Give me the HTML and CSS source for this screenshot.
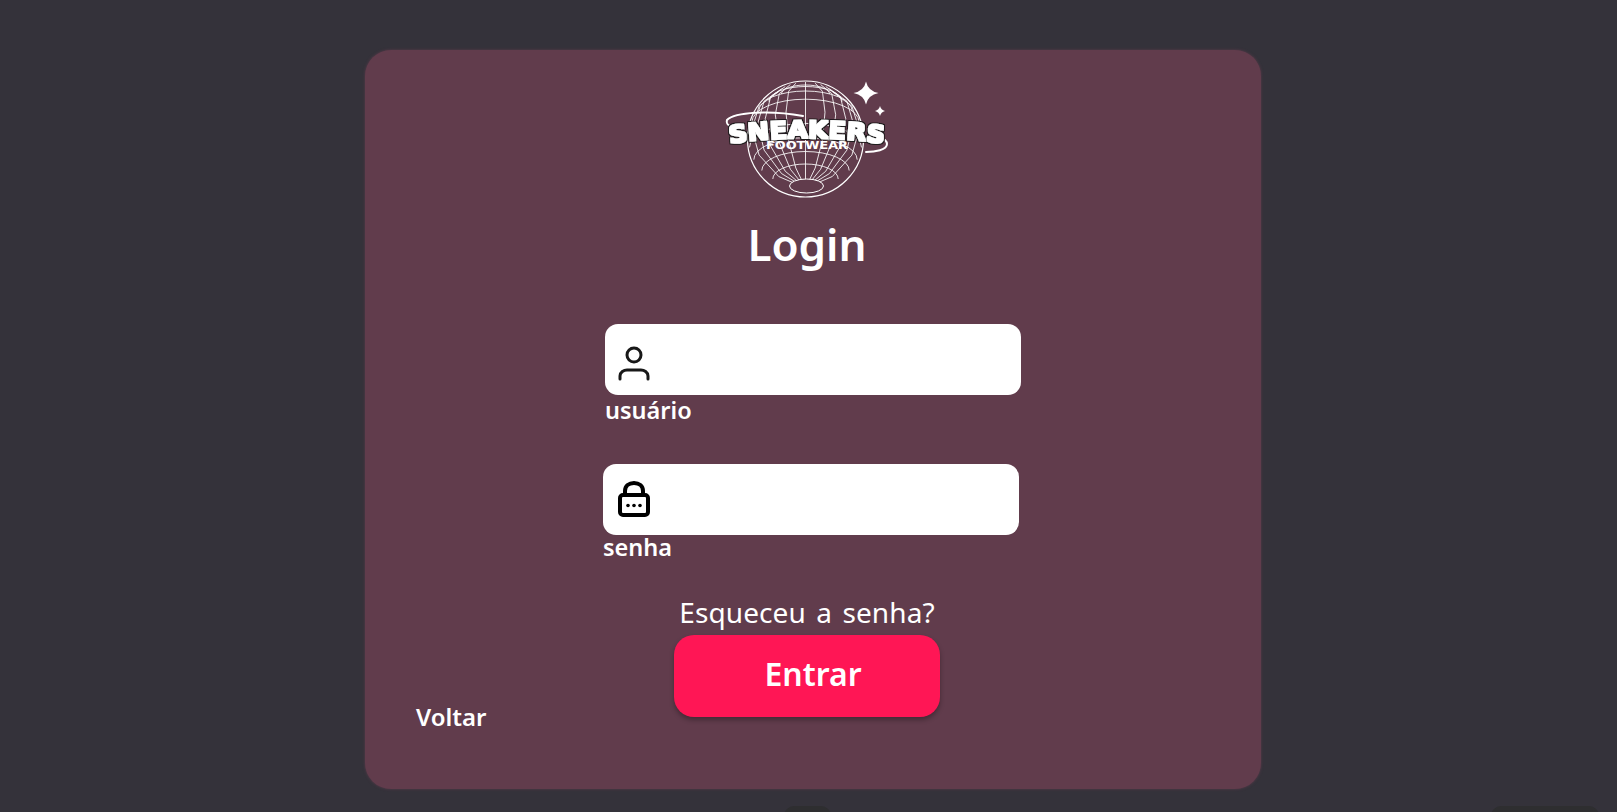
FILE: index.html
```html
<!DOCTYPE html>
<html lang="pt">
<head>
<meta charset="utf-8">
<title>Login</title>
<link rel="stylesheet" href="styles.css">
</head>
<body>
<main class="card">
  <svg class="logo" viewBox="0 0 170 122" width="170" height="122" aria-label="Sneakers Footwear">
    <defs>
      <filter id="heavy" x="-10%" y="-30%" width="120%" height="160%">
        <feMorphology in="SourceAlpha" operator="dilate" radius="2.4" result="outer"/>
        <feFlood flood-color="#1c1a1b"/>
        <feComposite in2="outer" operator="in" result="edge"/>
        <feMorphology in="SourceGraphic" operator="dilate" radius="0.7" result="fat"/>
        <feMerge><feMergeNode in="edge"/><feMergeNode in="fat"/></feMerge>
      </filter>
    </defs>
    <g class="globe" transform="translate(80.5 61)">
      <circle r="58" cx="0" cy="0"/>
      <path d="M0 49V-57"/>
      <g id="half">
        <path d="M0 49L9.7 29L16.9 1.3L19.5-26.8L16.9-47.7L9.7-55.8"/>
        <path d="M0 49L15.1 30.3L26.2 3.6L30.2-24.2L26.2-45.4L15.1-54.5"/>
        <path d="M0 49L20.2 32.3L34.9 7L40.3-20.2L34.9-42L20.2-52.5"/>
        <path d="M0 49L23.9 34.6L41.4 11.1L47.8-15.5L41.4-37.9L23.9-50.2"/>
        <path d="M0 49L26.8 37.5L46.4 16.1L53.6-9.7L46.4-32.9L26.8-47.3"/>
      </g>
      <use href="#half" transform="scale(-1 1)"/>
      <path d="M-32.7 40A32.7 15 0 0 1 32.7 40"/>
      <path d="M-43.7 31.5A43.7 19 0 0 1 43.7 31.5"/>
      <path d="M-51.7 20.7A51.7 22 0 0 1 51.7 20.7"/>
      <path d="M-56 8.4A56 24 0 0 1 56 8.4"/>
      <path d="M-53.6-16.8A53.6 23 0 0 1 53.6-16.8"/>
      <path d="M-46.7-28A46.7 20 0 0 1 46.7-28"/>
      <path d="M-36.6-37.5A36.6 15 0 0 1 36.6-37.5"/>
      <path d="M-24-45A24 9 0 0 1 24-45"/>
      <ellipse class="pole" cx="1" cy="47" rx="17" ry="7"/>
    </g>
    <path class="ring" d="M78 38C45 32 10 34 2 42C1 46 3 47 5 48"/>
    <path class="ring" d="M141 74C150 74 162 72 162 66C162 64 161 63 160 62"/>
    <path class="star" d="M141 3.5Q143 13 153.5 15Q143 17 141 26.5Q139 17 128.500 15Q139 13 141 3.500Z"/>
    <path class="star" d="M155 28Q156 32 160 33Q156 34 155 38Q154 34 150 33Q154 32 155 28Z"/>
    <path id="arc" d="M2 66Q81 54 162 66" fill="none"/>
    <text class="brand" filter="url(#heavy)"><textPath href="#arc" startOffset="50%" text-anchor="middle" textLength="155" lengthAdjust="spacingAndGlyphs">SNEAKERS</textPath></text>
    <text class="sub" x="82" y="71" textLength="82" lengthAdjust="spacingAndGlyphs" text-anchor="middle">FOOTWEAR</text>
  </svg>

  <h1 class="title">Login</h1>

  <form class="form">
    <div class="group">
      <div class="field">
        <svg class="icon" viewBox="0 0 32 36" width="32" height="36"><circle cx="16" cy="9" r="7" class="line"/><path class="line" d="M2 33V30C2 26 6 24 9 24H23C26 24 30 26 30 30V33"/></svg>
      </div>
      <label class="label">usuário</label>
    </div>
    <div class="group group-shift">
      <div class="field field-lock">
        <svg class="icon" viewBox="0 0 32 36" width="32" height="36">
          <path class="line" d="M7 14V10C7 5 11 2 16 2C21 2 25 5 25 10V14"/>
          <rect class="line" x="2" y="14" width="28" height="20" rx="3"/>
          <circle cx="10" cy="24.500" r="1.8"/><circle cx="16" cy="24.500" r="1.8"/><circle cx="22" cy="24.500" r="1.8"/>
        </svg>
      </div>
      <label class="label">senha</label>
    </div>
  </form>

  <p class="forgot">Esqueceu a senha?</p>

  <div class="actions">
    <a class="back">Voltar</a>
    <button class="submit" type="button">Entrar</button>
  </div>
</main>
<div class="peek">
  <span class="tab tab-small"></span>
  <span class="tab tab-wide"></span>
</div>
</body>
</html>
```
FILE: styles.css
```css
* { box-sizing: border-box; }
html, body { height: 100%; }
body {
  margin: 0;
  height: 812px;
  overflow: hidden;
  background: #34323a;
  font-family: "Noto Sans", "Open Sans", sans-serif;
  color: #fff;
  display: flex;
  flex-direction: column;
}
.card {
  width: 896px;
  height: 739px;
  margin: 50px 0 0 365px;
  padding-top: 28px;
  background: #613c4c;
  border-radius: 26px;
  box-shadow: 0 0 3px rgba(97, 60, 76, .9);
  display: flex;
  flex-direction: column;
  flex: none;
}
.logo { display: block; margin-left: 360px; flex: none; }
.globe { fill: none; stroke: #fff; stroke-width: .85; }
.globe circle { stroke-width: 1.2; }
.pole { fill: #613c4c; stroke-width: 1; }
.ring { fill: none; stroke: #fff; stroke-width: 2; stroke-linecap: round; }
.star { fill: #fff; }
.brand {
  font-family: "DejaVu Sans", sans-serif;
  font-weight: 700;
  font-size: 24px;
  fill: #fff;
}
.sub {
  font-family: "DejaVu Sans", sans-serif;
  font-weight: 700;
  font-size: 10px;
  fill: #fff;
}
.title {
  margin: 18px 0 54px;
  padding-right: 12px;
  height: 52px;
  text-align: center;
  font-size: 44px;
  line-height: 52px;
  font-weight: 600;
}
.form { margin-left: 240px; width: 416px; display: flex; flex-direction: column; gap: 39px; }
.group-shift { margin-left: -2px; }
.field {
  height: 71px;
  width: 416px;
  background: #fff;
  border-radius: 13px;
  padding: 22px 0 0 13px;
  display: flex;
  align-items: flex-start;
}
.field-lock { padding-top: 17px; padding-left: 15px; }
.icon { display: block; flex: none; }
.line { fill: none; stroke: #181818; stroke-width: 3; stroke-linecap: round; }
.field-lock .line { stroke: #000; stroke-width: 4; }
.icon circle:not(.line) { fill: #000; }
.label { display: block; font-size: 23.5px; line-height: 30px; font-weight: 600; }
.group-shift .label { line-height: 24px; }
.forgot {
  margin: 36px 0 6px;
  padding-right: 12px;
  text-align: center;
  font-size: 28px;
  line-height: 34px;
  letter-spacing: .1px;
  word-spacing: 3px;
  font-weight: 400;
}
.actions { display: flex; align-items: flex-start; padding-left: 51px; }
.back { width: 258px; margin-top: 67px; font-size: 24px; line-height: 30px; font-weight: 600; }
.submit {
  width: 266px;
  height: 82px;
  border: 0;
  border-radius: 20px;
  background: #ff1655;
  color: #fff;
  font-family: inherit;
  font-size: 32px;
  font-weight: 600;
  padding: 0 0 5px 12px;
  box-shadow: 0 3px 5px rgba(0, 0, 0, .3);
}
.peek { display: flex; margin-top: 17px; padding-left: 784px; gap: 660px; flex: none; }
.tab { display: block; height: 10px; background: #2e2e30; border-radius: 14px 14px 0 0; flex: none; }
.tab-small { width: 47px; }
.tab-wide { width: 108px; }
```
